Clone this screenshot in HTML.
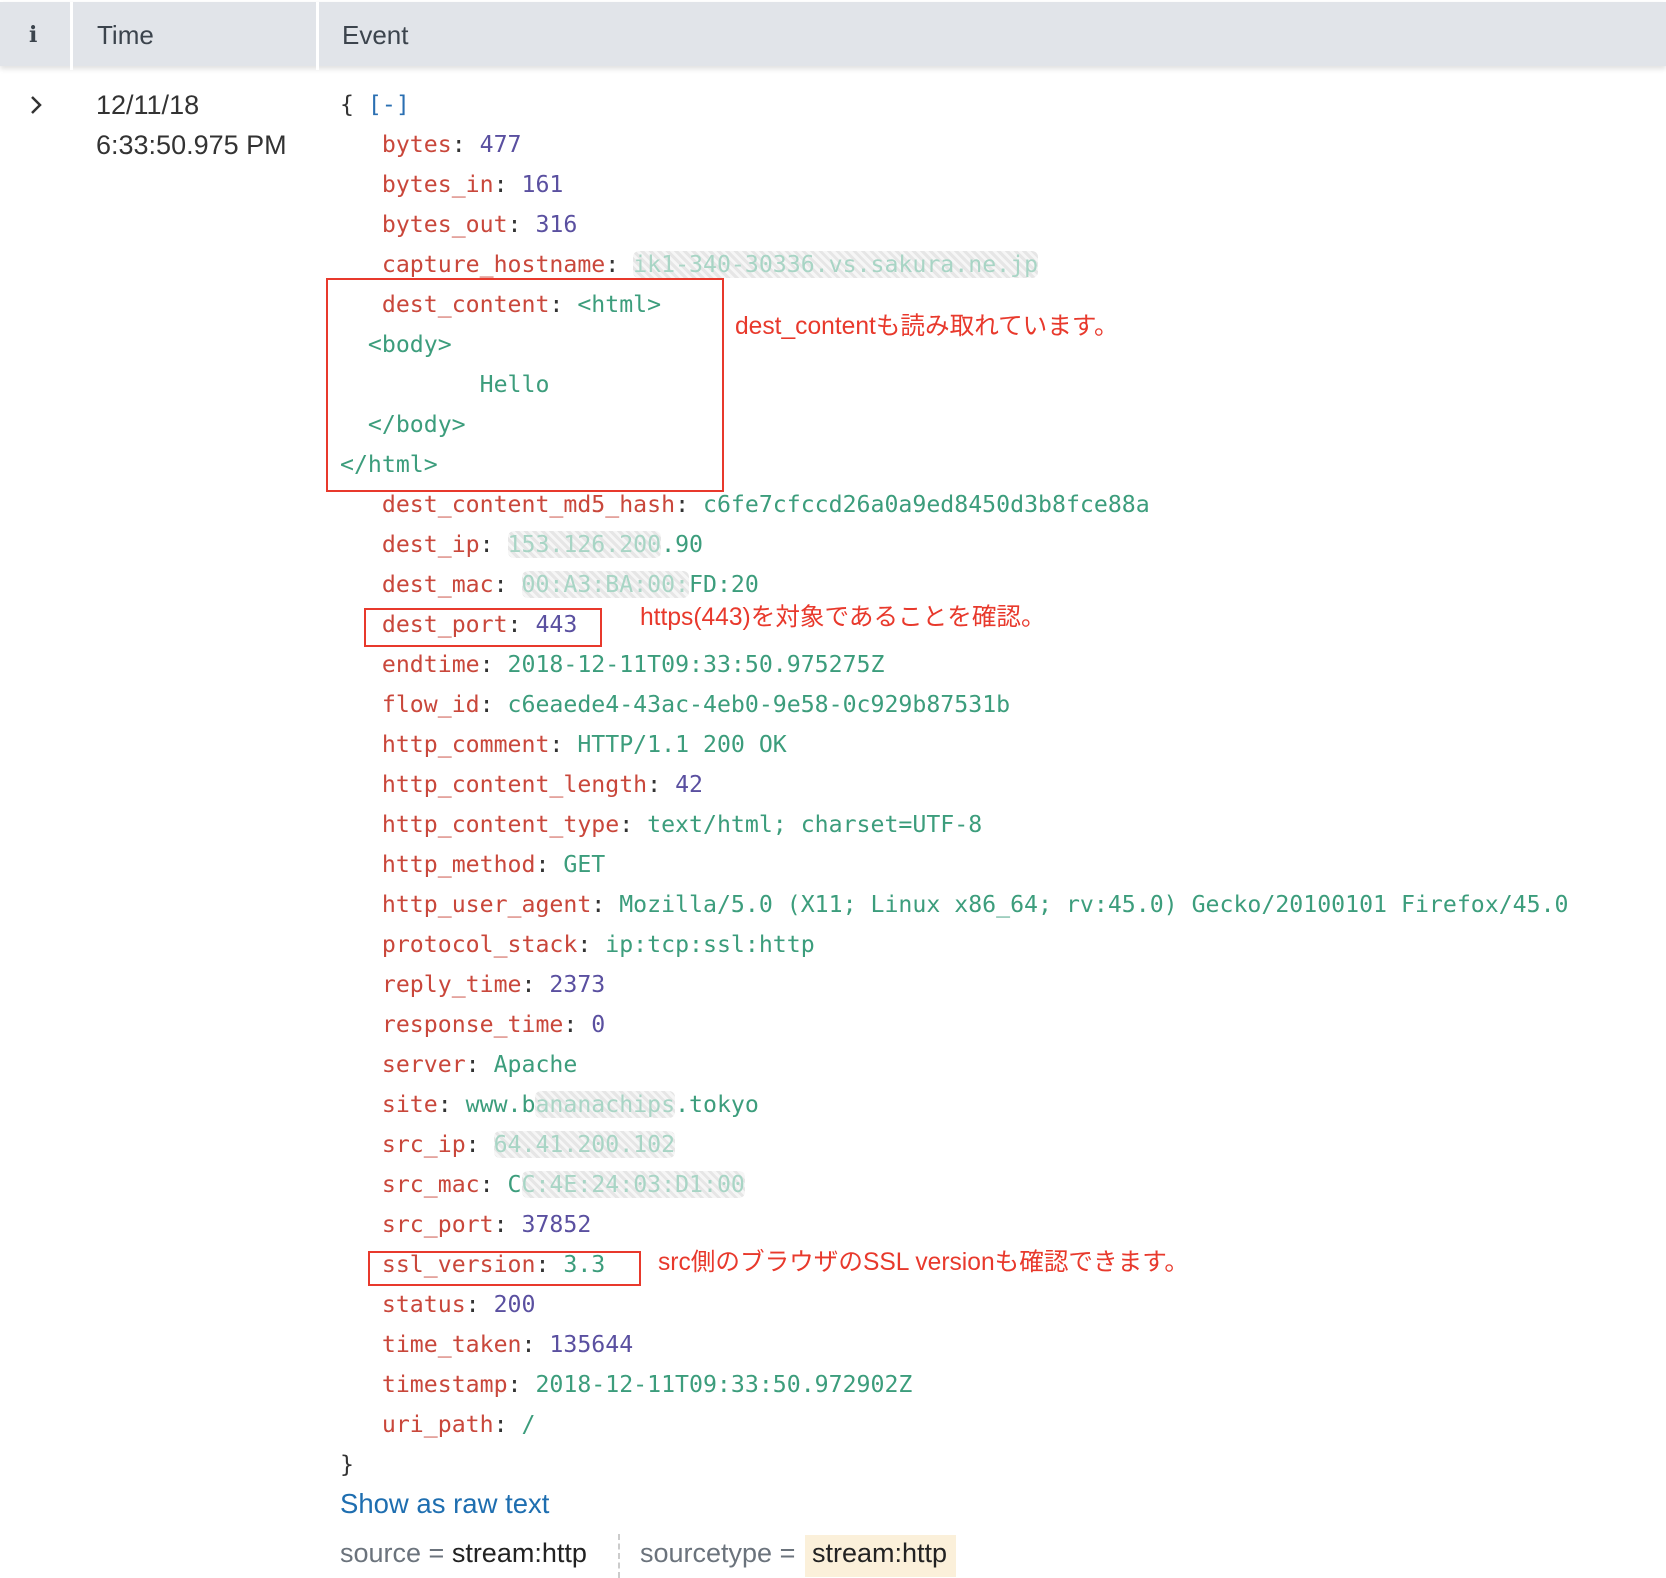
<!DOCTYPE html>
<html><head><meta charset="utf-8">
<style>
*{margin:0;padding:0;box-sizing:border-box}
body{width:1666px;height:1578px;background:#fff;position:relative;overflow:hidden;font-family:"Liberation Sans","Noto Sans CJK JP",sans-serif;color:#333}
.hdr{position:absolute;left:0;top:2px;width:1666px;height:64px;background:#e1e4e9;box-shadow:0 3px 5px rgba(0,0,0,0.12)}
.sep{position:absolute;top:0;width:3px;height:68px;background:#fff}
.ht{position:absolute;top:18px;font-size:25px;color:#3c444d}
.abs{position:absolute}
.code{position:absolute;left:340px;top:85px;font-family:"DejaVu Sans Mono","Liberation Mono",monospace;font-size:23.2px;line-height:40px;white-space:pre;color:#333}
.k{color:#c9473b}.n{color:#5a50a0}.s{color:#3c9d7c}.b{color:#2a6fb2}
.bl{color:#a8d5c5;background:repeating-linear-gradient(45deg,#e6e6e6 0 3px,#f6f6f6 3px 6px);border-radius:6px}
.box{position:absolute;border:2px solid #e8392c}
.ann{position:absolute;color:#e8392c;font-size:24.6px;white-space:nowrap;font-family:"Liberation Sans","Noto Sans CJK JP",sans-serif}
</style></head><body>
<div class="hdr">
  <div class="sep" style="left:70px"></div>
  <div class="sep" style="left:316px"></div>
  <div class="ht" style="left:29px;font-family:'DejaVu Serif',serif;font-weight:bold;font-size:22px;top:20px">i</div>
  <div class="ht" style="left:97px;font-size:26px">Time</div>
  <div class="ht" style="left:342px;font-size:26px">Event</div>
</div>
<svg class="abs" style="left:28px;top:94px" width="16" height="22" viewBox="0 0 16 22"><path d="M4 3 L12 11 L4 19" fill="none" stroke="#333" stroke-width="2.5"/></svg>
<div class="abs" style="left:96px;top:85px;font-size:27px;line-height:40px;color:#333">12/11/18<br>6:33:50.975 PM</div>
<div class="code">{ <span class="b">[-]</span>
   <span class="k">bytes</span>: <span class="n">477</span>
   <span class="k">bytes_in</span>: <span class="n">161</span>
   <span class="k">bytes_out</span>: <span class="n">316</span>
   <span class="k">capture_hostname</span>: <span class="bl">ik1-340-30336.vs.sakura.ne.jp</span>
   <span class="k">dest_content</span>: <span class="s">&lt;html&gt;</span>
  <span class="s">&lt;body&gt;</span>
          <span class="s">Hello</span>
  <span class="s">&lt;/body&gt;</span>
<span class="s">&lt;/html&gt;</span>
   <span class="k">dest_content_md5_hash</span>: <span class="s">c6fe7cfccd26a0a9ed8450d3b8fce88a</span>
   <span class="k">dest_ip</span>: <span class="bl">153.126.200</span><span class="s">.90</span>
   <span class="k">dest_mac</span>: <span class="bl">00:A3:BA:00:</span><span class="s">FD:20</span>
   <span class="k">dest_port</span>: <span class="n">443</span>
   <span class="k">endtime</span>: <span class="s">2018-12-11T09:33:50.975275Z</span>
   <span class="k">flow_id</span>: <span class="s">c6eaede4-43ac-4eb0-9e58-0c929b87531b</span>
   <span class="k">http_comment</span>: <span class="s">HTTP/1.1 200 OK</span>
   <span class="k">http_content_length</span>: <span class="n">42</span>
   <span class="k">http_content_type</span>: <span class="s">text/html; charset=UTF-8</span>
   <span class="k">http_method</span>: <span class="s">GET</span>
   <span class="k">http_user_agent</span>: <span class="s">Mozilla/5.0 (X11; Linux x86_64; rv:45.0) Gecko/20100101 Firefox/45.0</span>
   <span class="k">protocol_stack</span>: <span class="s">ip:tcp:ssl:http</span>
   <span class="k">reply_time</span>: <span class="n">2373</span>
   <span class="k">response_time</span>: <span class="n">0</span>
   <span class="k">server</span>: <span class="s">Apache</span>
   <span class="k">site</span>: <span class="s">www.b</span><span class="bl">ananachips</span><span class="s">.tokyo</span>
   <span class="k">src_ip</span>: <span class="bl">64.41.200.102</span>
   <span class="k">src_mac</span>: <span class="s">C</span><span class="bl">C:4E:24:03:D1:00</span>
   <span class="k">src_port</span>: <span class="n">37852</span>
   <span class="k">ssl_version</span>: <span class="s">3.3</span>
   <span class="k">status</span>: <span class="n">200</span>
   <span class="k">time_taken</span>: <span class="n">135644</span>
   <span class="k">timestamp</span>: <span class="s">2018-12-11T09:33:50.972902Z</span>
   <span class="k">uri_path</span>: <span class="s">/</span>
}</div>
<div class="box" style="left:326px;top:278px;width:398px;height:214px"></div>
<div class="box" style="left:364px;top:608px;width:238px;height:39px"></div>
<div class="box" style="left:368px;top:1251px;width:273px;height:35px"></div>
<div class="ann" style="left:735px;top:306px">dest_contentも読み取れています。</div>
<div class="ann" style="left:640px;top:597px">https(443)を対象であることを確認。</div>
<div class="ann" style="left:658px;top:1242px">src側のブラウザのSSL versionも確認できます。</div>
<div class="abs" style="left:340px;top:1488px;font-size:27.5px;color:#1e6eb0">Show as raw text</div>
<div class="abs" style="left:340px;top:1538px;font-size:27px;color:#6b737c">source = <span style="color:#222">stream:http</span></div>
<div class="abs" style="left:618px;top:1534px;height:44px;border-left:2px dashed #ccc"></div>
<div class="abs" style="left:640px;top:1538px;font-size:27px;color:#6b737c">sourcetype =</div>
<div class="abs" style="left:805px;top:1535px;width:151px;height:42px;background:#fbf0da"></div>
<div class="abs" style="left:812px;top:1538px;font-size:27px;color:#222">stream:http</div>
</body></html>
